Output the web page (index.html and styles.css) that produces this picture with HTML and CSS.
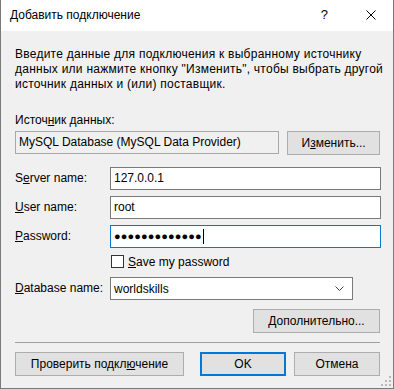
FILE: index.html
```html
<!DOCTYPE html>
<html lang="ru">
  <head>
    <meta charset="UTF-8" />
    <title>Добавить подключение</title>
    <link rel="stylesheet" href="styles.css">
  </head>
  <body>
    <div class="dialog">
      <div class="title-bar">
        <span class="title">Добавить подключение</span>
        <span class="help">?</span>
        <svg class="close" width="10" height="10" viewBox="0 0 10 10">
          <path d="M0.5 0.5 L9.5 9.5 M9.5 0.5 L0.5 9.5" stroke="#000" stroke-width="1" fill="none" />
        </svg>
      </div>

      <div class="content">
        <p class="intro">Введите данные для подключения к выбранному источнику<br>данных или нажмите кнопку "Изменить", чтобы выбрать другой<br>источник данных и (или) поставщик.</p>

        <div class="label">Источ<u>н</u>ик данных:</div>
        <div class="source-row">
          <div class="textbox readonly">MySQL Database (MySQL Data Provider)</div>
          <button class="btn change">И<u>з</u>менить...</button>
        </div>

        <div class="fields">
          <label>S<u>e</u>rver name:</label>
          <div class="textbox">127.0.0.1</div>

          <label><u>U</u>ser name:</label>
          <div class="textbox">root</div>

          <label><u>P</u>assword:</label>
          <div class="textbox focused"><span class="dots">●●●●●●●●●●●●●</span><span class="caret"></span></div>

          <span></span>
          <div class="check-row">
            <span class="checkbox"></span>
            <span><u>S</u>ave my password</span>
          </div>

          <label><u>D</u>atabase name:</label>
          <div class="combo">
            <span>worldskills</span>
            <svg width="9" height="5" viewBox="0 0 9 5">
              <path d="M0.5 0.5 L4.5 4.5 L8.5 0.5" stroke="#444" stroke-width="1" fill="none" />
            </svg>
          </div>
        </div>

        <div class="advanced-row">
          <button class="btn advanced"><u>Д</u>ополнительно...</button>
        </div>

        <hr class="separator" />

        <div class="footer">
          <button class="btn test">Проверить подкл<u>ю</u>чение</button>
          <button class="btn ok">OK</button>
          <button class="btn cancel">Отмена</button>
        </div>
      </div>

      <svg class="grip" width="10" height="10" viewBox="0 0 10 10">
        <rect x="8" y="0" width="2" height="2" fill="#b8b8b8" />
        <rect x="4" y="4" width="2" height="2" fill="#b8b8b8" />
        <rect x="8" y="4" width="2" height="2" fill="#b8b8b8" />
        <rect x="0" y="8" width="2" height="2" fill="#b8b8b8" />
        <rect x="4" y="8" width="2" height="2" fill="#b8b8b8" />
        <rect x="8" y="8" width="2" height="2" fill="#b8b8b8" />
      </svg>
    </div>
  </body>
</html>
```

FILE: styles.css
```css
body {
  margin: 0;
  padding: 0;
  background-color: #ffffff;
  font-family: "Liberation Sans", Arial, sans-serif;
  font-size: 12px;
  color: #000000;
}

.dialog {
  position: relative;
  width: 392px;
  height: 388px;
  border: 1px solid #7a7a7a;
  border-top: none;
  background-color: #f0f0f0;
  display: flex;
  flex-direction: column;
}

.title-bar {
  height: 31px;
  background-color: #ffffff;
  display: flex;
  align-items: center;
  padding-left: 9px;
  padding-right: 17px;
}

.title {
  flex: 1;
  margin-top: -1px;
}

.help {
  margin-right: 38px;
  font-size: 13px;
  margin-top: -2px;
}

.close {
  margin-top: -2px;
}

.content {
  padding: 0 13px 0 14px;
}

.intro {
  margin: 16px 0 0 0;
  line-height: 15px;
  white-space: nowrap;
  letter-spacing: 0.25px;
}

.label {
  margin-top: 21px;
  line-height: 15px;
}

.source-row {
  display: flex;
  margin-top: 3px;
  gap: 8px;
}

.textbox {
  box-sizing: border-box;
  height: 23px;
  border: 1px solid #7a7a7a;
  background-color: #ffffff;
  padding: 0 3px;
  line-height: 21px;
  white-space: nowrap;
  display: flex;
  align-items: center;
}

.textbox.readonly {
  width: 265px;
  background-color: #f0f0f0;
  border-color: #a8a8a8;
}

.textbox.focused {
  border-color: #0078d7;
}

.btn {
  box-sizing: border-box;
  height: 24px;
  border: 1px solid #adadad;
  background-color: #e1e1e1;
  font-family: inherit;
  font-size: 12px;
  color: #000000;
  padding: 0;
}

.change {
  width: 93px;
}

.fields {
  display: grid;
  grid-template-columns: 95px 271px;
  row-gap: 6px;
  margin-top: 12px;
  align-items: center;
}

.fields label {
  line-height: 23px;
}

.dots {
  font-size: 11px;
  letter-spacing: 0.1px;
}

.caret {
  display: inline-block;
  width: 1px;
  height: 15px;
  background-color: #000000;
  margin-left: 1px;
}

.check-row {
  display: flex;
  align-items: center;
  gap: 4px;
  height: 15px;
  margin-bottom: 2px;
}

.checkbox {
  box-sizing: border-box;
  width: 13px;
  height: 13px;
  border: 1px solid #333333;
  background-color: #ffffff;
  margin-left: 1px;
}

.combo {
  box-sizing: border-box;
  width: 243px;
  height: 23px;
  border: 1px solid #7a7a7a;
  background-color: #ffffff;
  display: flex;
  align-items: center;
  justify-content: space-between;
  padding: 0 8px 0 3px;
}

.advanced-row {
  display: flex;
  justify-content: flex-end;
  margin-top: 9px;
}

.advanced {
  width: 127px;
}

.separator {
  border: none;
  border-top: 1px solid #a0a0a0;
  margin: 9px 0 0 0;
  height: 0;
}

.footer {
  display: flex;
  margin-top: 9px;
}

.test {
  width: 169px;
}

.ok {
  width: 86px;
  margin-left: 16px;
  border: 2px solid #0078d7;
}

.cancel {
  width: 86px;
  margin-left: 8px;
}

.grip {
  position: absolute;
  right: 2px;
  bottom: 2px;
}
```
